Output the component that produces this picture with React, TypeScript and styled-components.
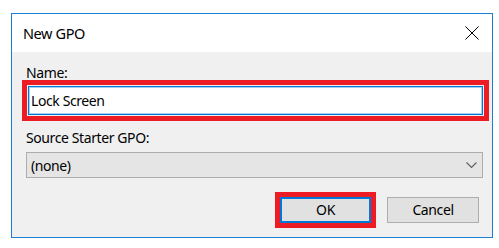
import styled, { createGlobalStyle } from 'styled-components'

const GlobalStyle = createGlobalStyle`
  html, body {
    margin: 0;
    padding: 0;
    background: #fff;
  }
  body {
    font-family: 'Segoe UI', 'Noto Sans', 'Open Sans', sans-serif;
    color: #000;
    letter-spacing: -0.4px;
  }
`

const Page = styled.div`
  padding: 13px 0 0 11px;
  width: 499px;
  height: 248px;
  box-sizing: border-box;
`

const Dialog = styled.div`
  width: 482px;
  height: 225px;
  box-sizing: border-box;
  border: 1px solid #1a7fd4;
  background: #f0f0f0;
  display: flex;
  flex-direction: column;
`

const TitleBar = styled.div`
  height: 38px;
  background: #fff;
  display: flex;
  align-items: center;
  justify-content: space-between;
  padding: 0 13px 0 11px;
  font-size: 14.5px;
  line-height: 20px;
`

const CloseButton = styled.button`
  border: 0;
  background: none;
  padding: 0;
  width: 14px;
  height: 14px;
  display: flex;
  svg {
    display: block;
  }
`

const Body = styled.div`
  flex: 1;
  padding: 11px 9px 0 14px;
  display: flex;
  flex-direction: column;
`

const Label = styled.label<{ $top?: number }>`
  display: block;
  font-size: 14px;
  line-height: 20px;
  height: 20px;
  margin-top: ${(p) => p.$top ?? 0}px;
`

const Highlight = styled.div`
  border: 5px solid #ed1c24;
  padding: 1px;
`

const NameHighlight = styled(Highlight)`
  margin: -3px -6px 0 -4px;
`

const TextBox = styled.div`
  height: 29px;
  box-sizing: border-box;
  border: 1px solid #0078d7;
  box-shadow: inset 0 0 0 1px #a7cdee;
  background: #fff;
  padding: 0 0 0 2px;
  display: flex;
  align-items: center;
  font-size: 14px;
`

const Combo = styled.div`
  margin-top: 4px;
  height: 26px;
  box-sizing: border-box;
  border: 1px solid #adadad;
  background: #e5e5e5;
  display: flex;
  align-items: center;
  justify-content: space-between;
  padding: 0 5px 0 4px;
  font-size: 14px;
`

const ButtonRow = styled.div`
  margin-top: 14px;
  display: flex;
  justify-content: flex-end;
  align-items: center;
  gap: 11px;
  padding-right: 4px;
`

const ButtonHighlight = styled(Highlight)`
  padding: 0;
`

const Button = styled.button<{ $default?: boolean }>`
  width: ${(p) => (p.$default ? 91 : 92)}px;
  height: 26px;
  box-sizing: border-box;
  border: ${(p) => (p.$default ? '2px solid #0078d7' : '1px solid #adadad')};
  background: #e1e1e1;
  font-family: inherit;
  letter-spacing: inherit;
  font-size: 14px;
  line-height: 20px;
  color: #000;
  padding: 0;
`

export default function App() {
  return (
    <Page>
      <GlobalStyle />
      <Dialog>
        <TitleBar>
          <span>New GPO</span>
          <CloseButton type='button'>
            <svg width='14' height='14' viewBox='0 0 14 14'>
              <path d='M0.5 0.5 L13.5 13.5 M13.5 0.5 L0.5 13.5' stroke='#000' strokeWidth='1' fill='none' />
            </svg>
          </CloseButton>
        </TitleBar>
        <Body>
          <Label>Name:</Label>
          <NameHighlight>
            <TextBox>Lock Screen</TextBox>
          </NameHighlight>
          <Label $top={7}>Source Starter GPO:</Label>
          <Combo>
            <span>(none)</span>
            <svg width='11' height='7' viewBox='0 0 11 7'>
              <path d='M0.5 0.5 L5.5 5.5 L10.5 0.5' stroke='#606060' strokeWidth='1.2' fill='none' />
            </svg>
          </Combo>
          <ButtonRow>
            <ButtonHighlight>
              <Button type='button' $default>OK</Button>
            </ButtonHighlight>
            <Button type='button'>Cancel</Button>
          </ButtonRow>
        </Body>
      </Dialog>
    </Page>
  )
}
